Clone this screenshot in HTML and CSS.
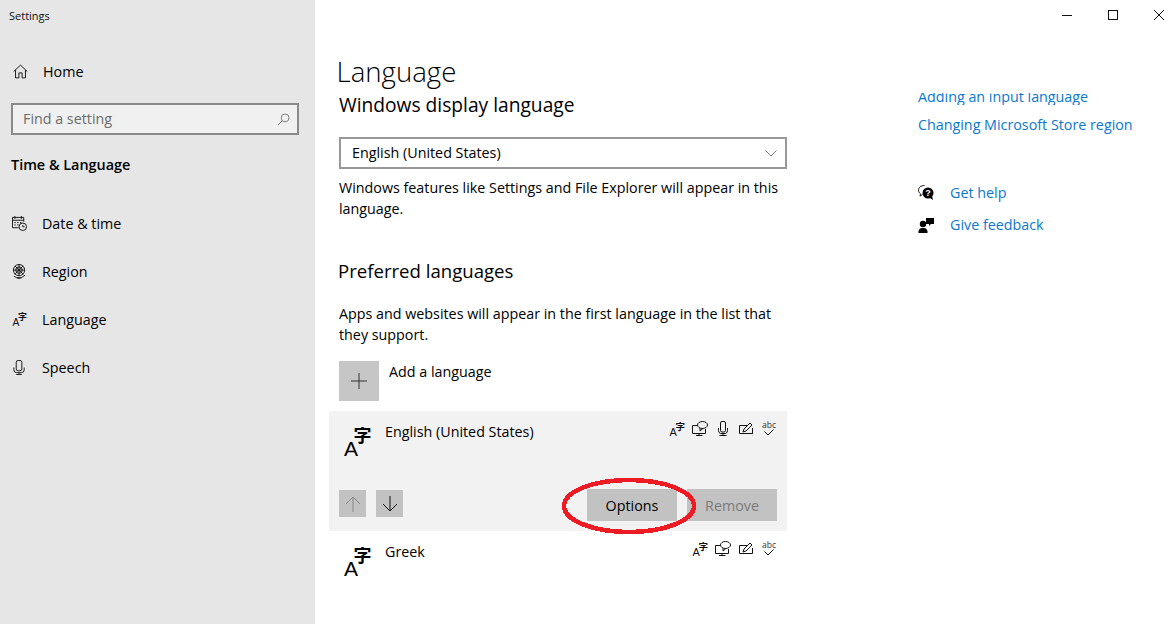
FILE: index.html
```html
<!DOCTYPE html>
<html lang="en">
<head>
<meta charset="utf-8">
<title>Settings</title>
<link rel="stylesheet" href="styles.css">
</head>
<body>
<svg class="defs" width="0" height="0" aria-hidden="true">
  <defs>
    <symbol id="lang" viewBox="0 0 28 30">
      <text x="0" y="29" class="g-a">A</text>
      <text x="9.500" y="15" class="g-z">字</text>
    </symbol>
    <symbol id="mini-lang" viewBox="0 0 16 16">
      <text x="0.500" y="15" class="g-a-s">A</text>
      <text x="6.500" y="8.500" class="g-z-s">字</text>
    </symbol>
    <symbol id="mini-speech" viewBox="0 0 16 16">
      <path d="M5.500 4.500h-5v8h13V8M7 12.500v2M4 14.500h6.500" class="ln"/>
      <ellipse cx="10.500" cy="4" rx="5" ry="3.500" class="ln"/>
      <path d="M8 7.200 8 10l3-2.500" class="ln"/>
    </symbol>
    <symbol id="mini-mic" viewBox="0 0 16 16">
      <rect x="5.500" y="0.500" width="5" height="10.500" rx="1.500" class="ln"/>
      <path d="M3.500 7v2.500a3 3 0 0 0 2 3h5a3 3 0 0 0 2-3V7M8 12.500v2M4.500 14.500h7" class="ln"/>
    </symbol>
    <symbol id="mini-pen" viewBox="0 0 16 16">
      <path d="M9 4.500H1.500v8h13V7" class="ln"/>
      <path d="M5 11l1-3 6-6 2 2-6 6z" class="ln"/>
    </symbol>
    <symbol id="mini-abc" viewBox="0 0 16 16">
      <text x="8" y="6.500" class="g-abc">abc</text>
      <path d="M3.500 10.500 7 14l5.500-5.500" class="ln"/>
    </symbol>
  </defs>
</svg>
<div class="window">
  <aside class="sidebar">
    <div class="app-title">Settings</div>
    <a class="home">
      <svg class="nav-icon" viewBox="0 0 16 16"><path d="M0.800 8 8 1.200 15.200 8M2.700 6.500v8.300h3.600V9.500h3.400v5.300h3.600V6.500" class="ln"/></svg>
      <span>Home</span>
    </a>
    <div class="search">
      <span class="search-text">Find a setting</span>
      <svg class="search-icon" viewBox="0 0 14 14"><circle cx="8.700" cy="5.300" r="4.200" class="ln-g"/><path d="M5.700 8.300 1 13" class="ln-g"/></svg>
    </div>
    <div class="section">Time &amp; Language</div>
    <nav class="nav">
      <a class="nav-item">
        <svg class="nav-icon" viewBox="0 0 16 16"><path d="M7 12.500H0.500V1.500h12V6M0.500 4.500h12M3 0v3M10 0v3" class="ln"/><path d="M2.500 7h1.500M5.500 7h1.500M8.500 7h1.500M2.500 9.500h1.500M5.500 9.500h1.500" class="ln"/><circle cx="11.500" cy="11.500" r="4" class="ln"/><path d="M11.500 9.500v2h2" class="ln"/></svg>
        <span>Date &amp; time</span>
      </a>
      <a class="nav-item">
        <svg class="nav-icon" viewBox="0 0 16 16"><circle cx="7.500" cy="6.500" r="6" class="ln"/><circle cx="7.500" cy="6.500" r="3.500" class="ln"/><path d="M3 2 12 11M12 2 3 11M7.500 0.500v12M1.500 6.500h12M2 13l3 1.500h5L14 12M7.500 14.500v1.500M5 16h5" class="ln"/></svg>
        <span>Region</span>
      </a>
      <a class="nav-item">
        <svg class="nav-icon"><use href="#mini-lang"/></svg>
        <span>Language</span>
      </a>
      <a class="nav-item">
        <svg class="nav-icon" viewBox="0 0 16 16"><rect x="4.500" y="0.500" width="6" height="11" rx="2" class="ln"/><path d="M2 8v2.500a3 3 0 0 0 3 3h5a3 3 0 0 0 3-3V8M7.500 13.500v2M4.500 15.500h6" class="ln"/></svg>
        <span>Speech</span>
      </a>
    </nav>
  </aside>
  <main class="main">
    <header class="controls">
      <svg class="ctl" viewBox="0 0 10 10"><path d="M0 5.500h10" class="ln"/></svg>
      <svg class="ctl" viewBox="0 0 10 10"><rect x="0.500" y="0.500" width="9" height="9" class="ln"/></svg>
      <svg class="ctl" viewBox="0 0 10 10"><path d="M0 0l10 10M10 0 0 10" class="ln"/></svg>
    </header>
    <h1 class="page-title">Language</h1>
    <div class="columns">
      <section class="content">
        <h2 class="h-display">Windows display language</h2>
        <div class="select">
          <span>English (United States)</span>
          <svg class="chev" viewBox="0 0 12 7"><path d="M0.500 0.500 6 6l5.500-5.500" class="ln-g"/></svg>
        </div>
        <p class="para para-a">Windows features like Settings and File Explorer will appear in this language.</p>
        <h2 class="h-pref">Preferred languages</h2>
        <p class="para para-b">Apps and websites will appear in the first language in the list that they support.</p>
        <div class="add">
          <div class="add-btn"><svg class="plus" viewBox="0 0 16 16"><path d="M8 0v16M0 8h16" class="ln-d"/></svg></div>
          <span class="add-label">Add a language</span>
        </div>
        <div class="lang selected">
          <div class="lang-top">
            <svg class="lang-icon"><use href="#lang"/></svg>
            <span class="lang-name">English (United States)</span>
            <div class="caps">
              <svg class="cap"><use href="#mini-lang"/></svg>
              <svg class="cap"><use href="#mini-speech"/></svg>
              <svg class="cap"><use href="#mini-mic"/></svg>
              <svg class="cap"><use href="#mini-pen"/></svg>
              <svg class="cap"><use href="#mini-abc"/></svg>
            </div>
          </div>
          <div class="lang-actions">
            <div class="arrow disabled"><svg viewBox="0 0 16 16"><path d="M8 1v15M1 8l7-7 7 7" class="ln-m"/></svg></div>
            <div class="arrow"><svg viewBox="0 0 16 16"><path d="M8 0v15M1 8l7 7 7-7" class="ln"/></svg></div>
            <div class="btn btn-first">Options</div>
            <div class="btn btn-off">Remove</div>
          </div>
          <svg class="ring" viewBox="0 0 136 58"><ellipse cx="67" cy="29" rx="65" ry="26" class="ring-line"/></svg>
        </div>
        <div class="lang">
          <div class="lang-top">
            <svg class="lang-icon"><use href="#lang"/></svg>
            <span class="lang-name">Greek</span>
            <div class="caps">
              <svg class="cap"><use href="#mini-lang"/></svg>
              <svg class="cap"><use href="#mini-speech"/></svg>
              <svg class="cap"><use href="#mini-pen"/></svg>
              <svg class="cap"><use href="#mini-abc"/></svg>
            </div>
          </div>
        </div>
      </section>
      <aside class="related">
        <div class="clip"><a class="link link-cut">Adding an input language</a></div>
        <a class="link">Changing Microsoft Store region</a>
        <div class="help">
          <svg class="help-icon" viewBox="0 0 16 16"><path d="M6.500 0.500C3 0.500 0.500 2.500 0.500 5.200c0 1.500.8 2.800 2 3.600L2 11l2.500-1.500" class="ln"/><circle cx="10" cy="8" r="5.500"/><path d="M12 13l3 2-1-4z"/><text x="10" y="11" class="g-q">?</text></svg>
          <a class="link">Get help</a>
        </div>
        <div class="help help-b">
          <svg class="help-icon" viewBox="0 0 16 16"><circle cx="5" cy="7" r="3.200"/><path d="M0.500 16v-2a4 4 0 0 1 4-3h1a4 4 0 0 1 4 3v2z"/><path d="M8 1h8v6h-3l-2 2V7H8z"/></svg>
          <a class="link">Give feedback</a>
        </div>
      </aside>
    </div>
  </main>
</div>
</body>
</html>
```
FILE: styles.css
```css
* { box-sizing: border-box; }
html, body { margin: 0; height: 100%; }
body { background: #fff; color: #000; font-family: "Open Sans", "Noto Sans", sans-serif; font-size: 14.3px; overflow: hidden; }
.defs { display: block; height: 0; }
.window { display: flex; width: 1176px; height: 624px; overflow: hidden; }

.ln { fill: none; stroke: #111; stroke-width: 1; }
.ln-g { fill: none; stroke: #777; stroke-width: 1; }
.ln-d { fill: none; stroke: #333; stroke-width: 1; }
.ln-m { fill: none; stroke: #888; stroke-width: 1; }
.g-a { font: 400 21px "Liberation Sans", sans-serif; fill: #000; }
.g-z { font: 700 18px "Noto Sans CJK SC", sans-serif; fill: #000; }
.g-a-s { font: 400 11px "Liberation Sans", sans-serif; fill: #111; }
.g-z-s { font: 700 9.5px "Noto Sans CJK SC", sans-serif; fill: #111; }
.g-abc { font: 400 8.5px "Open Sans", sans-serif; fill: #333; text-anchor: middle; }
.g-q { font: 700 9px "Liberation Sans", sans-serif; fill: #fff; text-anchor: middle; }

.sidebar { width: 315px; flex: none; background: #e6e6e6; padding: 8px 16px 0 11px; }
.app-title { font-size: 11px; line-height: 15px; margin-left: -2px; color: #111; }
.home { display: flex; align-items: center; gap: 15px; height: 24px; margin-top: 36px; margin-left: 2px; }
.nav-icon { width: 15px; height: 15px; flex: none; }
.search { display: flex; align-items: center; justify-content: space-between; height: 32px; margin-top: 20px; padding: 0 7px 2px 10px; background: #f0f0f0; border: 2px solid #8a8a8a; color: #6b6b6b; }
.search-icon { width: 13px; height: 13px; margin-top: 2px; }
.section { font-size: 14.4px; font-weight: 600; line-height: 20px; margin-top: 20px; }
.nav { margin-top: 24px; }
.nav-item { display: flex; align-items: center; gap: 15px; height: 48px; margin-left: 1px; }

.main { flex: 1; min-width: 0; display: flex; flex-direction: column; padding-left: 22px; }
.controls { display: flex; justify-content: flex-end; gap: 36px; padding: 10px 12px 0 0; height: 40px; }
.ctl { width: 10px; height: 10px; }
.page-title { margin: 11px 0 0 -0.5px; font-size: 27.6px; font-weight: 300; line-height: 40px; height: 41px; }
.columns { display: flex; }
.content { width: 450px; flex: none; padding-left: 2px; }
.h-display { margin: 0; font-size: 19.2px; font-weight: 400; line-height: 26px; }
.select { display: flex; align-items: center; justify-content: space-between; width: 448px; height: 32px; margin-top: 19px; padding: 0 8px 2px 11px; border: 2px solid #999; }
.chev { width: 12px; height: 7px; margin-top: 2px; }
.para { margin: 0; width: 445px; line-height: 21px; }
.para-a { margin-top: 8px; }
.h-pref { margin: 39px 0 0 -1px; font-size: 18.6px; font-weight: 400; line-height: 26px; }
.para-b { margin-top: 19px; }
.add { display: flex; gap: 10px; margin-top: 16px; }
.add-btn { width: 40px; height: 40px; display: flex; align-items: center; justify-content: center; background: #c6c6c6; }
.plus { width: 16px; height: 16px; }
.add-label { line-height: 21px; }
.lang { position: relative; width: 458px; margin: 10px 0 0 -10px; padding: 0 10px 0 15px; }
.selected { background: #f2f2f2; height: 120px; }
.lang + .lang { margin-top: 0; }
.lang-top { display: flex; align-items: flex-start; padding-top: 10px; }
.lang-icon { width: 28px; height: 30px; flex: none; margin-top: 6px; }
.lang-name { margin-left: 13px; line-height: 21px; flex: 1; }
.caps { display: flex; gap: 7px; }
.cap { width: 16px; height: 16px; }
.lang-actions { display: flex; align-items: flex-start; margin: 32px 0 0 -5px; }
.arrow { width: 27px; height: 27px; margin: 1px 10px 0 0; display: flex; align-items: center; justify-content: center; background: #c2c2c2; }
.arrow svg { width: 16px; height: 16px; }
.btn { width: 90px; height: 32px; display: flex; align-items: center; justify-content: center; background: #c2c2c2; margin-left: 10px; }
.btn-first { margin-left: auto; }
.btn-off { color: #7a7a7a; }
.ring { position: absolute; left: 233px; top: 66px; width: 136px; height: 58px; shape-rendering: crispEdges; }
.ring-line { fill: none; stroke: #ed1c24; stroke-width: 4.5; }

.related { margin-left: 131px; }
.link { color: #0a78d2; display: block; line-height: 21px; white-space: nowrap; }
.clip { height: 12px; margin-top: 1px; overflow: hidden; }
.link-cut { margin-top: -7px; }
.related > .link { margin-top: 9px; }
.help { display: flex; align-items: center; gap: 16px; margin-top: 47px; height: 21px; }
.help-b { margin-top: 11px; }
.help-icon { width: 16px; height: 16px; flex: none; }
```
